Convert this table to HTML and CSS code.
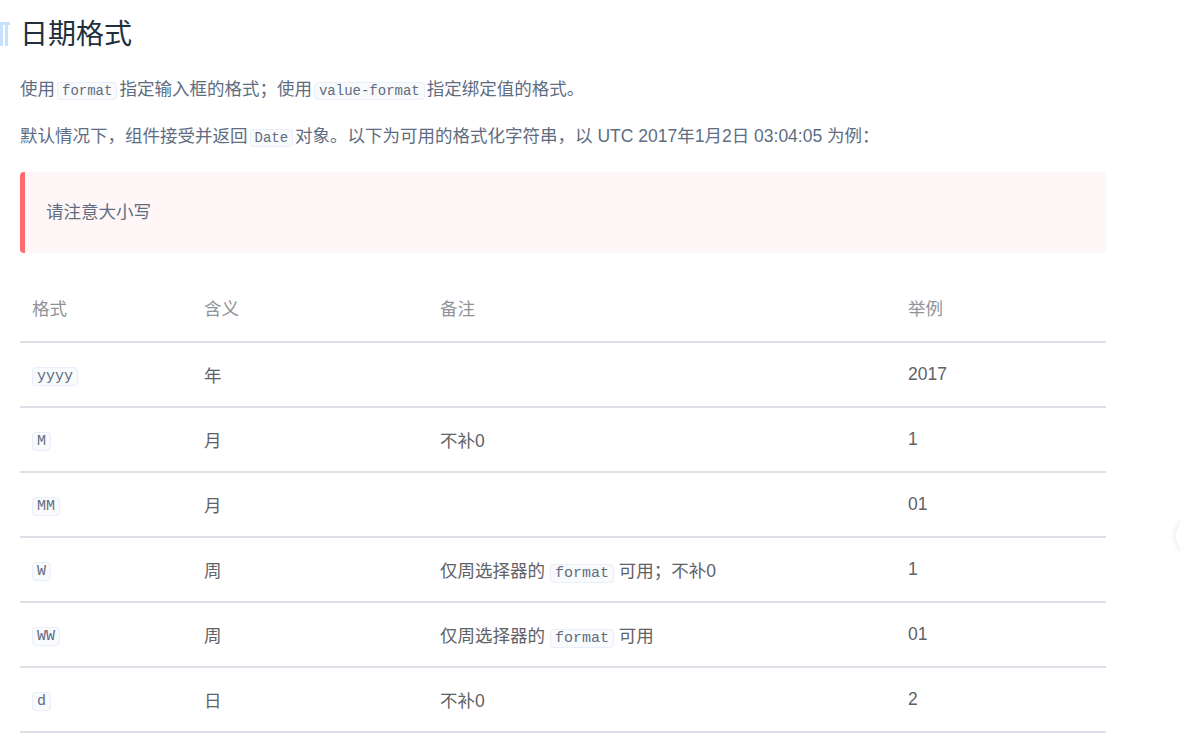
FILE: index.html
```html
<!DOCTYPE html>
<html lang="zh-CN">
<head>
  <meta charset="UTF-8">
  <title>日期格式</title>
  <link rel="stylesheet" href="styles.css">
</head>
<body>
  <div class="doc">
    <h2 class="doc-title">
      <svg class="anchor" width="10" height="24" viewBox="0 0 10 24">
        <rect x="0" y="0" width="3" height="24" fill="#c6e2ff"/>
        <rect x="5" y="0" width="3" height="24" fill="#c6e2ff"/>
        <rect x="0" y="0" width="10" height="3" fill="#c6e2ff"/>
      </svg>
      日期格式
    </h2>
    <p>使用<code>format</code>指定输入框的格式；使用<code>value-format</code>指定绑定值的格式。</p>
    <p>默认情况下，组件接受并返回<code>Date</code>对象。以下为可用的格式化字符串，以 UTC 2017年1月2日 03:04:05 为例：</p>

    <div class="tip">请注意大小写</div>

    <table class="fmt-table">
      <thead>
        <tr><th class="c1">格式</th><th class="c2">含义</th><th class="c3">备注</th><th class="c4">举例</th></tr>
      </thead>
      <tbody>
        <tr><td><code>yyyy</code></td><td>年</td><td></td><td>2017</td></tr>
        <tr><td><code>M</code></td><td>月</td><td>不补0</td><td>1</td></tr>
        <tr><td><code>MM</code></td><td>月</td><td></td><td>01</td></tr>
        <tr><td><code>W</code></td><td>周</td><td>仅周选择器的 <code>format</code> 可用；不补0</td><td>1</td></tr>
        <tr><td><code>WW</code></td><td>周</td><td>仅周选择器的 <code>format</code> 可用</td><td>01</td></tr>
        <tr><td><code>d</code></td><td>日</td><td>不补0</td><td>2</td></tr>
      </tbody>
    </table>
  </div>
  <div class="side-btn"></div>
</body>
</html>
```

FILE: styles.css
```css
/* Page */
body {
  margin: 0;
  font-family: "Liberation Sans", "Noto Sans CJK SC", sans-serif;
  color: #5e6d82;
  background: #ffffff;
  overflow: hidden;
}

.doc {
  padding: 0 74px 0 20px;
}

/* Heading */
.doc-title {
  position: relative;
  margin: 0;
  padding-top: 17px;
  font-size: 28px;
  font-weight: 400;
  line-height: 36px;
  color: #1f2f3d;
}

.anchor {
  position: absolute;
  left: -20px;
  top: 22px;
}

p {
  margin: 20px 0 0;
  font-size: 17.5px;
  line-height: 32px;
}

p + p {
  margin-top: 13px;
}

code {
  font-family: "Liberation Mono", "DejaVu Sans Mono", monospace;
  font-size: 14px;
  color: #5e6d82;
  background: #f9fafc;
  border: 1px solid #eaeefb;
  border-radius: 4px;
  padding: 0 4px;
  margin: 0 2px;
}

/* Tip block */
.tip {
  margin-top: 18px;
  padding: 0 21px;
  height: 81px;
  line-height: 81px;
  font-size: 17.5px;
  color: #5e6d82;
  background: #fff6f7;
  border-left: 5px solid #fe6c6f;
  border-radius: 4px;
}

/* Table */
.fmt-table {
  width: 100%;
  margin-top: 20px;
  border-collapse: collapse;
  font-size: 17.5px;
}

.fmt-table th,
.fmt-table td {
  height: 63px;
  padding: 0 12px;
  text-align: left;
  border-bottom: 2px solid #dcdfe6;
  white-space: nowrap;
}

.fmt-table th {
  font-weight: 400;
  color: #909399;
  height: 68px;
}

.fmt-table td {
  color: #606266;
}

.fmt-table td code {
  font-size: 15px;
  margin: 0;
}

.c1 { width: 148px; }
.c2 { width: 212px; }
.c3 { width: 444px; }

/* Faint floating button at the right edge */
.side-btn {
  position: fixed;
  right: -36px;
  top: 516px;
  width: 40px;
  height: 40px;
  border-radius: 50%;
  background: #ffffff;
  box-shadow: 0 0 6px rgba(0, 0, 0, 0.12);
}
```
